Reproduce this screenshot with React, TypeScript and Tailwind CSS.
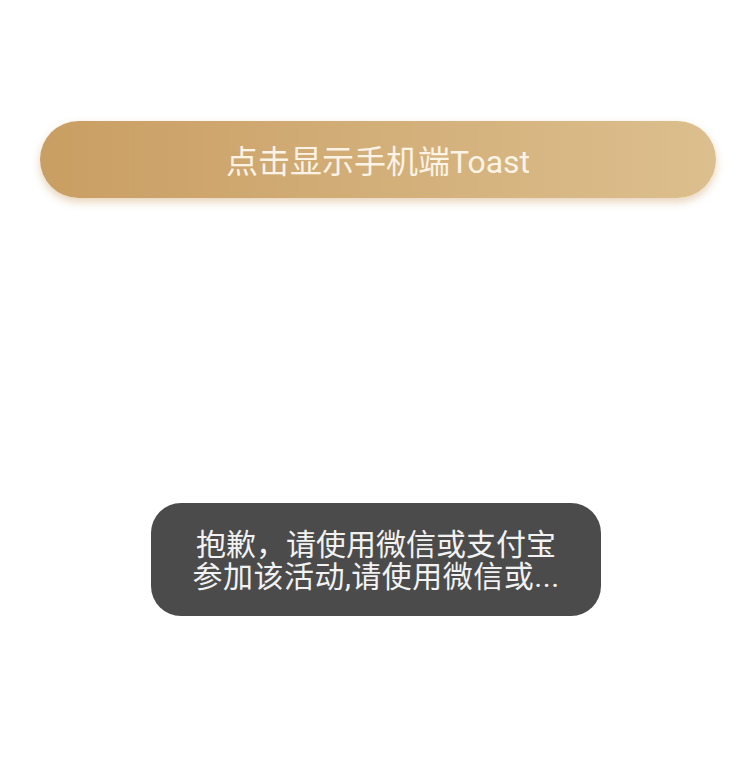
import React from "react";

const fontStack = {
  fontFamily: 'Roboto, "Noto Sans CJK SC", sans-serif',
};

export default function App() {
  return (
    <div className="min-h-[783px] w-full bg-white" style={fontStack}>
      <div className="pt-[121px] pl-[40px]">
        <button className="flex h-[77px] w-[676px] items-center justify-center rounded-full bg-gradient-to-r from-[#c99e63] to-[#dcbf8e] pt-[5px] text-[32px] text-[#fbf3e6] shadow-[0_4px_8px_rgba(201,158,99,0.45)]">
          点击显示手机端Toast
        </button>
      </div>

      <div className="fixed left-[151px] top-[503px] flex h-[113px] w-[450px] flex-col items-center justify-center rounded-[30px] bg-[#4b4b4b] pt-[3px] text-[30px] leading-[32px] text-[#f2f2f2]">
        <span>抱歉，请使用微信或支付宝</span>
        <span className="tracking-[0.5px]">参加该活动,请使用微信或...</span>
      </div>
    </div>
  );
}
